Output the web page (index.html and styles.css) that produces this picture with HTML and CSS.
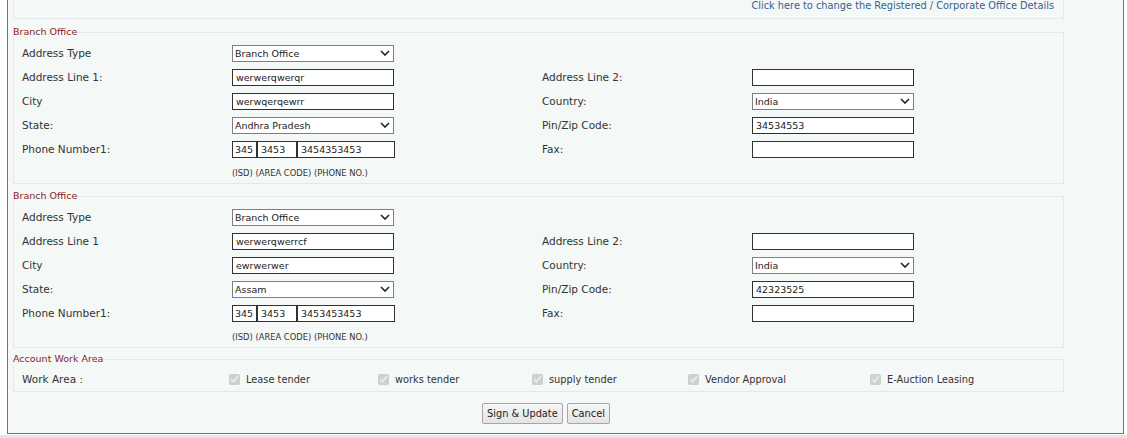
FILE: index.html
```html
<!DOCTYPE html>
<html>
<head>
<meta charset="utf-8">
<link rel="stylesheet" href="styles.css">
</head>
<body>
<div class="frame">
  <div class="toplink"><a href="#">Click here to change the Registered / Corporate Office Details</a></div>

  <fieldset class="group first">
    <legend>Branch Office</legend>
    <div class="grid">
      <label class="lbl">Address Type</label>
      <span class="sel c2"><select><option>Branch Office</option></select><svg viewBox="0 0 10 6"><path d="M1 1 L5 5 L9 1" /></svg></span>
      <label class="lbl r2">Address Line 1:</label>
      <input class="txt" value="werwerqwerqr">
      <label class="lbl">Address Line 2:</label>
      <input class="txt" value="">
      <label class="lbl">City</label>
      <input class="txt" value="werwqerqewrr">
      <label class="lbl">Country:</label>
      <span class="sel"><select><option>India</option></select><svg viewBox="0 0 10 6"><path d="M1 1 L5 5 L9 1" /></svg></span>
      <label class="lbl">State:</label>
      <span class="sel"><select><option>Andhra Pradesh</option></select><svg viewBox="0 0 10 6"><path d="M1 1 L5 5 L9 1" /></svg></span>
      <label class="lbl">Pin/Zip Code:</label>
      <input class="txt" value="34534553">
      <label class="lbl">Phone Number1:</label>
      <span class="phone"><input class="txt isd" value="345"><input class="txt area" value="3453"><input class="txt num" value="3454353453"></span>
      <label class="lbl">Fax:</label>
      <input class="txt" value="">
      <span class="hint">(ISD) (AREA CODE) (PHONE NO.)</span>
    </div>
  </fieldset>

  <fieldset class="group">
    <legend>Branch Office</legend>
    <div class="grid">
      <label class="lbl">Address Type</label>
      <span class="sel c2"><select><option>Branch Office</option></select><svg viewBox="0 0 10 6"><path d="M1 1 L5 5 L9 1" /></svg></span>
      <label class="lbl r2">Address Line 1</label>
      <input class="txt" value="werwerqwerrcf">
      <label class="lbl">Address Line 2:</label>
      <input class="txt" value="">
      <label class="lbl">City</label>
      <input class="txt" value="ewrwerwer">
      <label class="lbl">Country:</label>
      <span class="sel"><select><option>India</option></select><svg viewBox="0 0 10 6"><path d="M1 1 L5 5 L9 1" /></svg></span>
      <label class="lbl">State:</label>
      <span class="sel"><select><option>Assam</option></select><svg viewBox="0 0 10 6"><path d="M1 1 L5 5 L9 1" /></svg></span>
      <label class="lbl">Pin/Zip Code:</label>
      <input class="txt" value="42323525">
      <label class="lbl">Phone Number1:</label>
      <span class="phone"><input class="txt isd" value="345"><input class="txt area" value="3453"><input class="txt num" value="3453453453"></span>
      <label class="lbl">Fax:</label>
      <input class="txt" value="">
      <span class="hint">(ISD) (AREA CODE) (PHONE NO.)</span>
    </div>
  </fieldset>

  <fieldset class="group work">
    <legend>Account Work Area</legend>
    <div class="workrow">
      <span class="lbl wl">Work Area :</span>
      <label class="chk"><input type="checkbox" checked disabled><span>Lease tender</span></label>
      <label class="chk"><input type="checkbox" checked disabled><span>works tender</span></label>
      <label class="chk"><input type="checkbox" checked disabled><span>supply tender</span></label>
      <label class="chk"><input type="checkbox" checked disabled><span>Vendor Approval</span></label>
      <label class="chk"><input type="checkbox" checked disabled><span>E-Auction Leasing</span></label>
    </div>
  </fieldset>

  <div class="actions">
    <button type="button" class="btn">Sign &amp; Update</button>
    <button type="button" class="btn">Cancel</button>
  </div>
</div>
<div class="strip"></div>
</body>
</html>
```
FILE: styles.css
```css
html, body {
  margin: 0;
  padding: 0;
  background: #ffffff;
  font-family: "DejaVu Sans", Verdana, sans-serif;
  color: #333;
}

.frame {
  margin: 0 3px 0 7px;
  border: 1px solid #6b7575;
  border-top: none;
  background: #f4f8f7;
  padding: 0 59px 9px 5px;
}

.toplink {
  border: 1px solid #e3e9e8;
  border-top: none;
  height: 19px;
  box-sizing: border-box;
  padding: 0 9px 0 0;
  text-align: right;
  font-size: 9.8px;
  line-height: 12px;
}

.toplink a {
  color: #3a5f8c;
  text-decoration: none;
}

.group {
  margin: 6px 0 0 0;
  padding: 3px 0 0 0;
  border: 1px solid #e3e9e8;
  min-width: 0;
}

.group.first {
  margin-top: 7px;
}

.group legend {
  padding: 0;
  margin-left: -1px;
  font-size: 9.5px;
  line-height: 12px;
  color: #8b1c1c;
}

.grid {
  display: grid;
  grid-template-columns: 210px 310px 210px 1fr;
  grid-template-rows: repeat(5, 24px) 22px;
  align-items: center;
  padding-left: 8px;
}

.lbl {
  font-size: 10.5px;
  color: #333;
  white-space: nowrap;
}

.c2 { grid-column: 2 / 5; }
.r2 { grid-column: 1; }

.txt {
  width: 162px;
  height: 17px;
  box-sizing: border-box;
  border: 1px solid #2f3333;
  background: #fff;
  font-family: "DejaVu Sans", Verdana, sans-serif;
  font-size: 9.5px;
  color: #222;
  padding: 0 3px;
  margin: 0;
  outline: none;
}

.sel {
  position: relative;
  display: block;
  width: 162px;
  height: 17px;
}

.sel select {
  appearance: none;
  -webkit-appearance: none;
  width: 162px;
  height: 17px;
  box-sizing: border-box;
  border: 1px solid #7d8080;
  border-radius: 0;
  background: #fff;
  font-family: "DejaVu Sans", Verdana, sans-serif;
  font-size: 9.5px;
  color: #222;
  padding: 0 0 0 2px;
  margin: 0;
  display: block;
}

.sel svg {
  position: absolute;
  right: 4px;
  top: 5px;
  width: 10px;
  height: 6px;
  pointer-events: none;
}

.sel svg path {
  fill: none;
  stroke: #222;
  stroke-width: 1.6;
}

.phone {
  display: flex;
  width: 163px;
}

.phone .isd { width: 25px; padding: 0 2px; }
.phone .area { width: 40px; }
.phone .num { width: 98px; }

.hint {
  grid-column: 2;
  grid-row: 6;
  font-family: "DejaVu Sans Condensed", "DejaVu Sans", sans-serif;
  font-size: 9.3px;
  color: #333;
  align-self: center;
}

.work {
  margin-top: 5px;
  padding-top: 2px;
}

.workrow {
  display: grid;
  grid-template-columns: 207px 149px 154px 156px 182px 1fr;
  height: 24px;
  align-items: center;
  padding-left: 8px;
}

.chk {
  display: flex;
  align-items: center;
  font-size: 9.8px;
  color: #333;
  white-space: nowrap;
}

.chk input {
  width: 11px;
  height: 11px;
  margin: 0 6px 0 0;
  accent-color: #c8c8c8;
}

.actions {
  display: flex;
  gap: 4px;
  padding-left: 469px;
  margin-top: 11px;
}

.btn {
  height: 21px;
  padding: 0 4px;
  border: 1px solid #a6a6a6;
  border-radius: 2px;
  background: linear-gradient(#f6f6f6, #e4e4e4);
  font-family: "DejaVu Sans", Verdana, sans-serif;
  font-size: 9.8px;
  color: #222;
}

.strip {
  height: 3px;
  margin-top: 1px;
  background: #e1e5e4;
}
```
